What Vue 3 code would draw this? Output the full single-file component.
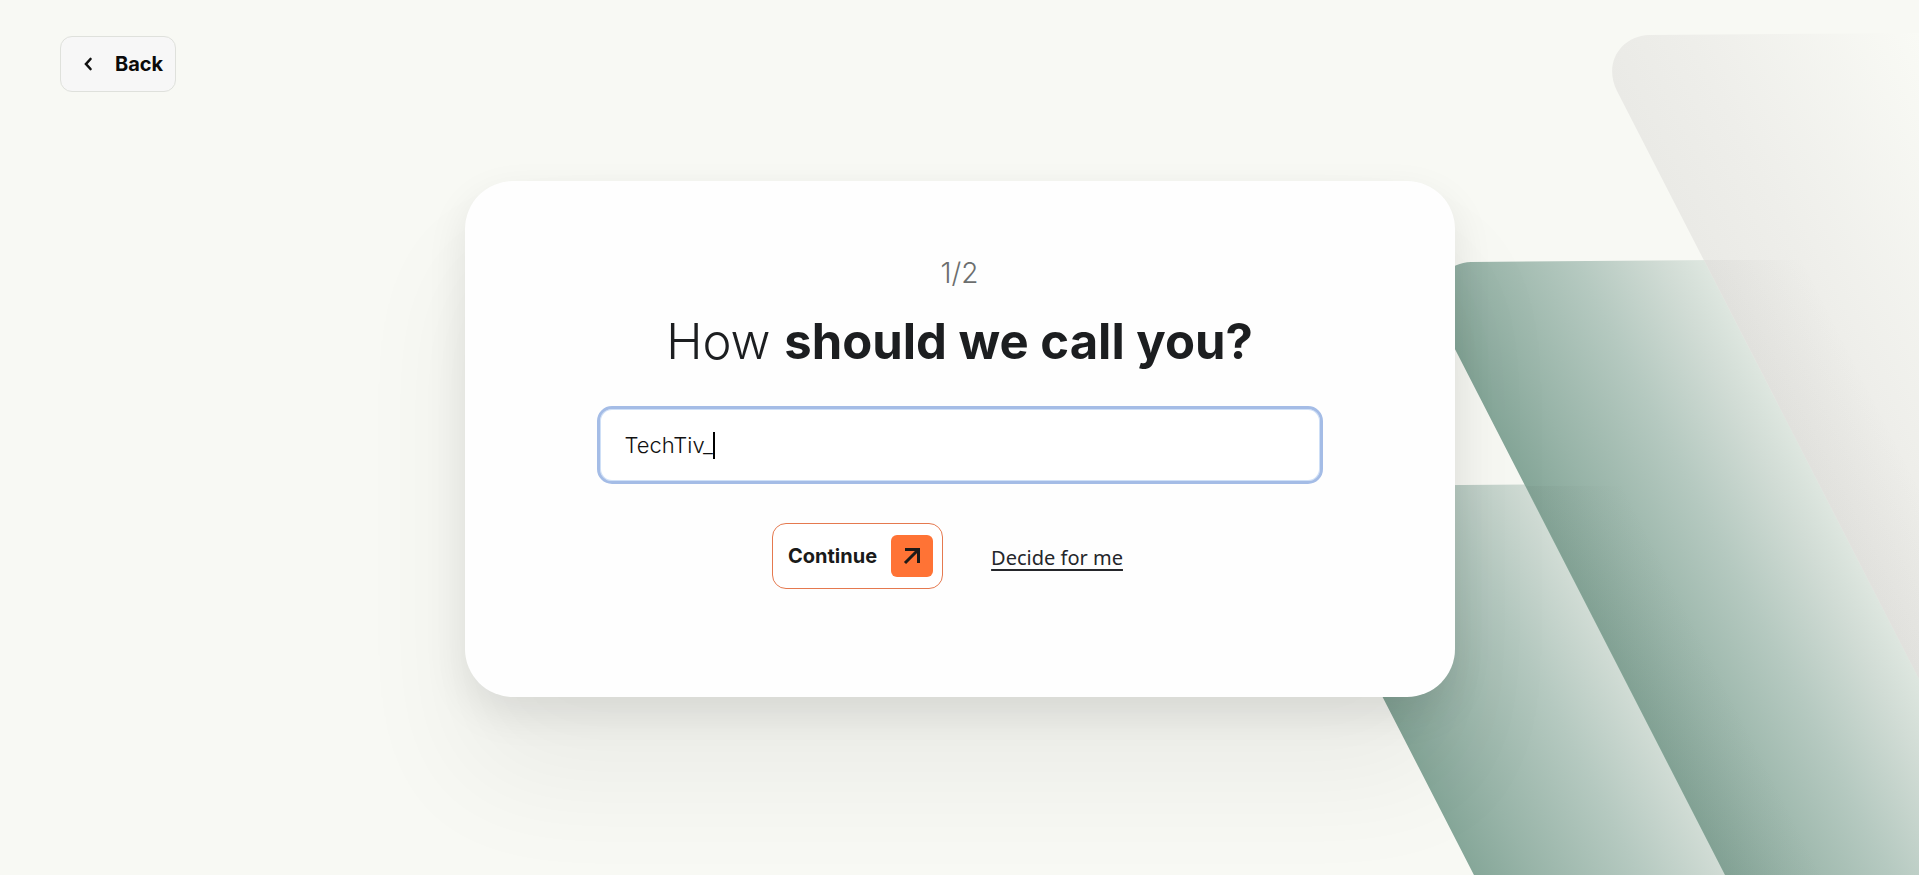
<script setup>
import { ref } from 'vue'

const step = ref(1)
const totalSteps = 2
const name = ref('TechTiv_')
</script>

<template>
  <div class="page">
    <svg class="backdrop" viewBox="0 0 660 875" preserveAspectRatio="xMaxYMin slice" aria-hidden="true">
      <defs>
        <linearGradient id="green" gradientUnits="userSpaceOnUse" x1="0" y1="0" x2="261" y2="-134">
          <stop offset="0" stop-color="#86a799" />
          <stop offset="0.18" stop-color="#98b4a8" />
          <stop offset="0.5" stop-color="#b5c9c0" />
          <stop offset="0.76" stop-color="#d1dcd5" />
          <stop offset="1" stop-color="#e8efe8" />
        </linearGradient>
        <linearGradient id="grey" gradientUnits="userSpaceOnUse" x1="0" y1="0" x2="261" y2="-134">
          <stop offset="0" stop-color="#eaeae6" />
          <stop offset="0.3" stop-color="#eeeeea" />
          <stop offset="1" stop-color="#f9faf5" />
        </linearGradient>
        <linearGradient id="shade" gradientUnits="userSpaceOnUse" x1="0" y1="0" x2="80" y2="-41">
          <stop offset="0" stop-color="#333" stop-opacity="0.05" />
          <stop offset="1" stop-color="#333" stop-opacity="0" />
        </linearGradient>
        <path id="slab" d="M60 0 L700 -5 V1400 H718 L28 56 C14 28 32 1 60 0 Z" />
      </defs>
      <use href="#slab" x="16" y="486" fill="url(#green)" />
      <use href="#slab" x="152" y="262" fill="url(#green)" />
      <path transform="translate(152 262)" d="M115 224 H260 L600 887 V1170 Z" fill="url(#shade)" />
      <use href="#slab" x="330" y="35" fill="url(#grey)" />
      <path transform="translate(330 35)" d="M115 225 H220 L560 888 V1092 Z" fill="url(#shade)" />
    </svg>

    <header class="topbar">
      <button type="button" class="back">
        <svg width="10" height="16" viewBox="0 0 10 16" aria-hidden="true">
          <path d="M7.5 3 L3 8 L7.5 13" fill="none" stroke="#111" stroke-width="2.6" stroke-linecap="round" />
        </svg>
        Back
      </button>
    </header>

    <main>
      <form class="card" @submit.prevent>
        <p class="step">{{ step }}/{{ totalSteps }}</p>
        <h1><label for="name">How <strong>should we call you?</strong></label></h1>

        <label class="field" for="name">
          <input id="name" v-model="name" type="text" autocomplete="off" spellcheck="false" />
          <span class="caret"></span>
        </label>

        <div class="actions">
          <button type="submit" class="continue">
            Continue
            <span class="arrow">
              <svg width="18" height="18" viewBox="0 0 18 18" aria-hidden="true">
                <path d="M2 2.5 H15.5 V16 M15 3 L2 16" fill="none" stroke="#1d1a18" stroke-width="3" />
              </svg>
            </span>
          </button>
          <a href="#" class="decide">Decide for me</a>
        </div>
      </form>
    </main>
  </div>
</template>

<style>
body {
  margin: 0;
  background: #f8f9f4;
}
</style>

<style scoped>
.page {
  position: relative;
  box-sizing: border-box;
  min-height: 100vh;
  overflow: hidden;
  font-family: Inter, "Liberation Sans", sans-serif;
  color: #1c1e20;
}

.backdrop {
  position: absolute;
  top: 0;
  right: 0;
  height: 100%;
}

.topbar {
  position: relative;
  padding: 36px 60px 0;
}

button {
  font-family: inherit;
  font-size: 20px;
  font-weight: 700;
  cursor: pointer;
}

.back {
  display: flex;
  align-items: center;
  gap: 22px;
  height: 56px;
  padding: 0 12px 0 22px;
  border: 1px solid #dfe1dc;
  border-radius: 12px;
  background: #f7f7f7;
  color: #0a0a0a;
}

main {
  position: relative;
  display: flex;
  justify-content: center;
  padding: 89px 24px 0;
}

.card {
  box-sizing: border-box;
  width: 100%;
  max-width: 990px;
  padding: 74px 132px 108px;
  border-radius: 48px;
  background: #fefefe;
  box-shadow:
    0 16px 40px rgba(0, 0, 0, 0.09),
    0 80px 120px rgba(0, 0, 0, 0.06);
}

.step {
  margin: 0 0 21px;
  font-size: 28px;
  font-weight: 300;
  line-height: 36px;
  text-align: center;
  color: #6c6e6e;
}

h1 {
  margin: 0 0 34px;
  font-size: 49px;
  font-weight: 300;
  line-height: 60px;
  text-align: center;
}

h1 strong {
  font-weight: 750;
}

.field {
  display: flex;
  align-items: center;
  box-sizing: border-box;
  height: 78px;
  padding: 0 25px;
  border: 3px solid #a4bce6;
  border-radius: 15px;
  background: #fff;
  box-shadow: inset 0 0 0 1px #cfe0f7;
  cursor: text;
}

.field input {
  field-sizing: content;
  min-width: 0;
  max-width: 100%;
  padding: 0;
  border: 0;
  outline: 0;
  background: none;
  font-family: inherit;
  font-size: 22px;
  font-weight: 300;
  line-height: 28px;
  color: #111;
  caret-color: transparent;
}

.caret {
  width: 2px;
  height: 27px;
  background: #000;
}

.actions {
  display: flex;
  justify-content: center;
  align-items: center;
  gap: 48px;
  margin-top: 39px;
  padding-right: 24px;
}

.continue {
  display: flex;
  align-items: center;
  gap: 14px;
  height: 66px;
  padding: 0 9px 0 15px;
  border: 1px solid #e5794f;
  border-radius: 14px;
  background: #fff;
  color: #1a1a1a;
}

.arrow {
  display: grid;
  place-items: center;
  width: 42px;
  height: 42px;
  border-radius: 6px;
  background: #ff7335;
}

.decide {
  padding-top: 2px;
  font-family: "Noto Sans", sans-serif;
  font-size: 20px;
  color: #24262a;
  text-decoration-thickness: 2px;
  text-underline-offset: 4px;
}
</style>
